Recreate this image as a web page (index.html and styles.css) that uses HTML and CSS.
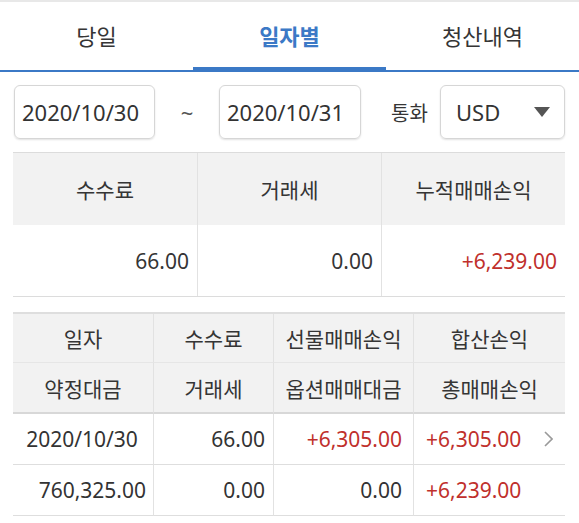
FILE: index.html
```html
<!DOCTYPE html>
<html lang="ko">
<head>
<meta charset="utf-8">
<link rel="stylesheet" href="styles.css">
</head>
<body>
<div class="page">
  <nav class="tabs">
    <div class="tab">당일</div>
    <div class="tab active">일자별</div>
    <div class="tab">청산내역</div>
  </nav>

  <div class="filters">
    <div class="box date">2020/10/30</div>
    <span class="tilde">~</span>
    <div class="box date">2020/10/31</div>
    <span class="label">통화</span>
    <div class="box select">
      <span>USD</span>
      <svg class="caret" width="16" height="10" viewBox="0 0 16 10"><path d="M0 0H16L8 10Z" fill="#555"/></svg>
    </div>
  </div>

  <div class="summary">
    <div class="th">수수료</div>
    <div class="th">거래세</div>
    <div class="th">누적매매손익</div>
    <div class="td num">66.00</div>
    <div class="td num">0.00</div>
    <div class="td num red">+6,239.00</div>
  </div>

  <div class="detail">
    <div class="h1">일자</div>
    <div class="h1">수수료</div>
    <div class="h1">선물매매손익</div>
    <div class="h1">합산손익</div>
    <div class="h2">약정대금</div>
    <div class="h2">거래세</div>
    <div class="h2">옵션매매대금</div>
    <div class="h2">총매매손익</div>

    <div class="c c1 center">2020/10/30</div>
    <div class="c c2">66.00</div>
    <div class="c c3 red">+6,305.00</div>
    <div class="c c4 red">+6,305.00<svg class="chev" width="9" height="16" viewBox="0 0 9 16"><path d="M1 1L8 8L1 15" fill="none" stroke="#9a9a9a" stroke-width="1.6"/></svg></div>

    <div class="c c1">760,325.00</div>
    <div class="c c2">0.00</div>
    <div class="c c3">0.00</div>
    <div class="c c4 red">+6,239.00</div>
  </div>
</div>
</body>
</html>
```

FILE: styles.css
```css
* { box-sizing: border-box; }
html, body { margin: 0; padding: 0; background: #fff; }
body {
  font-family: "Noto Sans", "Noto Sans CJK KR", sans-serif;
  color: #353535;
}
.page { width: 579px; }

.tabs {
  display: grid;
  grid-template-columns: 193px 193px 193px;
  height: 72px;
  border-top: 2px solid #e8e8e8;
  border-bottom: 2px solid #3b79c6;
}
.tab {
  display: flex;
  align-items: center;
  justify-content: center;
  font-size: 22px;
  color: #353535;
  padding-bottom: 2px;
}
.tab.active {
  color: #3b79c6;
  font-weight: 700;
  border-bottom: 3px solid #3b79c6;
  padding-bottom: 0;
}

.filters {
  display: flex;
  align-items: center;
  padding: 0 14px;
  margin: 13px 0;
  height: 54px;
}
.box {
  height: 54px;
  border: 1px solid #d6d6d6;
  border-radius: 6px;
  box-shadow: 0 1px 2px rgba(0,0,0,0.12);
  display: flex;
  align-items: center;
  font-size: 22px;
  color: #333;
}
.date { width: 141px; padding-left: 7px; }
.date + .tilde + .date { width: 142px; }
.tilde {
  width: 64px;
  text-align: center;
  font-size: 22px;
  color: #555;
}
.label {
  margin-left: 30px;
  width: 40px;
  font-size: 20px;
  color: #353535;
}
.select {
  margin-left: 9px;
  width: 125px;
  padding-left: 15px;
  justify-content: space-between;
  padding-right: 14px;
}
.caret { display: block; }

.summary {
  display: grid;
  grid-template-columns: 184px 184px 184px;
  margin-left: 13px;
  width: 552px;
  border-top: 1px solid #dcdcdc;
  border-bottom: 1px solid #dcdcdc;
  font-size: 21px;
}
.summary .th, .summary .td {
  height: 72px;
  display: flex;
  align-items: center;
  border-left: 1px solid #e2e2e2;
}
.summary .th:nth-child(3n+1), .summary .td:nth-child(3n+1) { border-left: none; }
.summary .th {
  background: #f2f2f2;
  justify-content: center;
  color: #353535;
}
.summary .td { justify-content: flex-end; padding-right: 8px; height: 71px; }

.red { color: #c0302c !important; }

.detail {
  display: grid;
  grid-template-columns: 140px 120px 140px 152px;
  margin: 15px 0 0 13px;
  width: 552px;
  border-top: 2px solid #dedede;
  font-size: 21px;
}
.detail > div {
  display: flex;
  align-items: center;
  border-left: 1px solid #e2e2e2;
}
.detail > div:nth-child(4n+1) { border-left: none; }
.detail .h1, .detail .h2 {
  background: #f2f2f2;
  justify-content: center;
  color: #353535;
}
.detail .h1 { height: 49px; border-bottom: 1px solid #e6e6e6; }
.detail .h2 { height: 51px; border-bottom: 2px solid #d8d8d8; }
.detail .c {
  height: 51px;
  border-bottom: 1px solid #dedede;
  justify-content: flex-end;
  color: #333;
}
.detail .c1 { padding-right: 7px; }
.detail .c1.center { justify-content: center; padding-right: 2px; }
.detail .c2 { padding-right: 8px; }
.detail .c3 { padding-right: 11px; }
.detail .c4 { justify-content: flex-start; padding-left: 12px; }
.chev { margin-left: 23px; display: block; }
```
